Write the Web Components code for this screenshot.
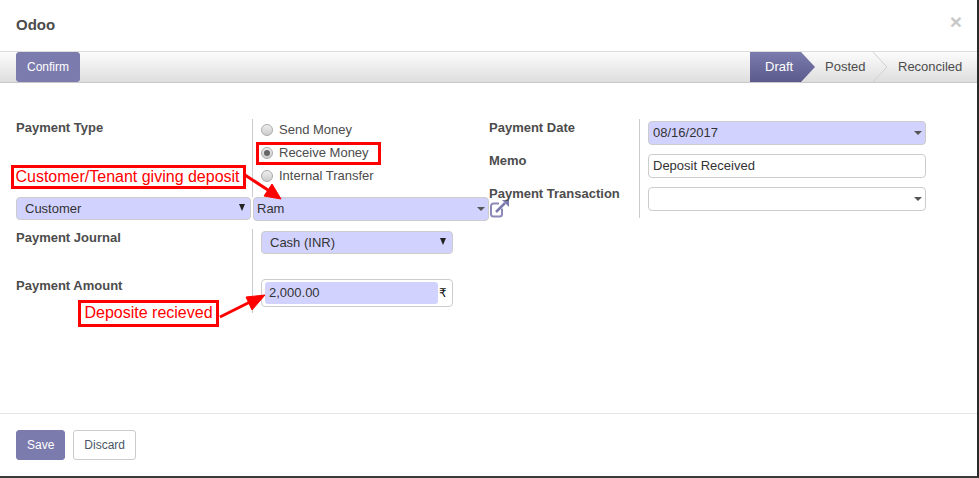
<!DOCTYPE html>
<html><head><meta charset="utf-8"><style>
html,body{margin:0;padding:0;background:#fff}
body{font:13px "Liberation Sans",Arial,sans-serif;color:#4c4c4c}
</style></head><body>
<o-dialog title-text="Odoo">
  <o-btn slot="actions" primary style="height:30px">Confirm</o-btn>
  <o-status slot="status"></o-status>
  <o-form></o-form>
  <o-btn slot="footer" primary>Save</o-btn>
  <o-btn slot="footer">Discard</o-btn>
</o-dialog>
<o-notes></o-notes>
<script>
function def(name,html,init){customElements.define(name,class extends HTMLElement{
  constructor(){super();const r=this.attachShadow({mode:'open'});r.innerHTML=typeof html==='function'?html(this):html;}
  connectedCallback(){if(init)init(this)}
})}
def('o-btn',`<style>
:host{display:inline-flex;align-items:center;justify-content:center;box-sizing:border-box;height:30px;padding:0 10px;border:1px solid #ccc;border-radius:3px;background:#fff;color:#4a5668;font:12px "Liberation Sans",sans-serif}
:host([primary]){background:#7c7bad;border-color:#7c7bad;color:#fff}
</style><slot></slot>`);
def('o-dialog',`<style>
:host{display:flex;flex-direction:column;box-sizing:border-box;width:979px;height:478px;border-right:2px solid #2a2a2a;border-bottom:2px solid #3a3a3a;background:#fff}
header{height:51px;flex:none;display:flex;align-items:center;justify-content:space-between;box-sizing:border-box;padding:0 19px 0 16px}
h4{margin:0;font:bold 15px "Liberation Sans",sans-serif;color:#4c4c4c;position:relative;top:-1px}
.x{font:bold 21px "Liberation Sans",sans-serif;color:#c8c8c8;line-height:1;position:relative;top:-4px;left:4px}
.bar{height:32px;flex:none;box-sizing:border-box;display:flex;justify-content:space-between;padding:0 0 0 16px;border-top:1px solid #ddd;border-bottom:1px solid #c8c8c8;background:linear-gradient(#fcfcfc,#dedede)}
main{flex:1;min-height:0}
footer{height:63px;flex:none;box-sizing:border-box;border-top:1px solid #e5e5e5;padding:16px 16px;display:flex;gap:8px}
</style>
<header><h4></h4><span class="x">×</span></header>
<div class="bar"><slot name="actions"></slot><slot name="status"></slot></div>
<main><slot></slot></main>
<footer><slot name="footer"></slot></footer>`,el=>{el.shadowRoot.querySelector('h4').textContent=el.getAttribute('title-text')});
def('o-status',`<style>
:host{display:block;height:30px;width:227px;flex:none}
.w{display:flex;height:29px;position:relative;font:13px "Liberation Sans",sans-serif;color:#4c4c4c;align-items:center}
.d{position:absolute;left:0;top:0;width:66px;height:30px;box-sizing:border-box;display:flex;align-items:center;padding:0 0 1px 15px;color:#fff;background:linear-gradient(#7c7bad,#5b5a8c);clip-path:polygon(0 0,51px 0,65px 15px,51px 30px,0 30px)}
.p{position:absolute;left:75px}.r{position:absolute;left:148px}
svg{position:absolute;left:121px;top:0}
</style><div class="w"><div class="d">Draft</div><span class="p">Posted</span>
<svg width="18" height="30" fill="none" stroke="#cfcfcf"><path d="M2 0l14 15L2 30"/></svg><span class="r">Reconciled</span></div>`);
def('o-select',`<style>
:host{display:block;box-sizing:border-box;height:24px;border:1px solid #ccc;border-radius:4px;background:#fff;position:relative;font:13px "Liberation Sans",sans-serif;color:#333;line-height:22px;padding-left:3px}
:host([req]){background:#d2d2ff}
:host([native]){padding-left:8px;height:23px}
i{position:absolute;right:3px;top:9px;width:0;height:0;border:4px solid transparent;border-top-color:#555;border-bottom:0}
b{position:absolute;right:5px;top:6px;width:0;height:0;border:3.5px solid transparent;border-top:7px solid #222;border-bottom:0}
</style><slot></slot><i></i>`,el=>{if(el.hasAttribute('native')){const s=el.shadowRoot;s.querySelector('i').remove();const b=document.createElement('b');if(el.classList.contains('cash'))b.style.right='6px';s.appendChild(b)}});
def('o-radio',`<style>
:host{display:flex;align-items:center;height:23px;gap:6px;font:13px "Liberation Sans",sans-serif;color:#4c4c4c}
u{width:12px;height:12px;box-sizing:border-box;border:1px solid #aaa;border-radius:50%;background:linear-gradient(#eee,#ccc);display:grid;place-items:center}
:host([on]) u::after{content:"";width:6px;height:6px;border-radius:50%;background:#666}
</style><u></u><slot></slot>`);
def('o-form',`<style>
:host{display:flex;padding-top:36px;height:100%;box-sizing:border-box}
.l{font:bold 13px "Liberation Sans",sans-serif;color:#4c4c4c;box-sizing:border-box}
.left{margin-left:16px;width:473px;flex:none}
.top{display:flex;height:78px}
.top .l{width:236px;padding-top:1px}
.cell{border-left:1px solid #ccc;padding-left:8px;padding-top:0;box-sizing:border-box}
.top .radios{margin-top:-1px}
.mid{display:flex;height:25px;align-items:flex-start}
.mid o-select:first-child{width:235px;margin-right:2px;flex:none}
.mid o-select:nth-child(2){width:236px;flex:none}
.mid svg{flex:none;margin:3px 0 0 1px;overflow:visible}
.bot{display:grid;grid-template-columns:236px 1fr;margin-top:7px}
.bot .cell{height:84px;padding-top:2px}
.names .l{height:48px;padding-top:1px}
.amt{margin-top:25px;width:192px;height:28px;box-sizing:border-box;border:1px solid #ccc;border-radius:4px;display:flex;align-items:center;padding:2px 0 2px 3px;gap:1px;font:13px "Liberation Sans",sans-serif;color:#222}
.amt span{width:173px;flex:none;box-sizing:border-box;height:22px;background:#d2d2ff;border-radius:3px;line-height:22px;padding-left:4px;color:#333}
.amt em{font:normal 12px "DejaVu Sans",sans-serif;color:#111}
.right{display:flex;height:99px}
.right .names{width:150px}
.right .names .l{height:33px;padding-top:1px}
.right .cell{width:278px;display:flex;flex-direction:column;gap:9px;padding-top:2px;box-sizing:content-box}
.right o-select{padding-left:4px}
.cash{width:192px}
</style>
<div class="left">
 <div class="top"><div class="l">Payment Type</div><div class="cell"><div class="radios">
  <o-radio>Send Money</o-radio><o-radio on>Receive Money</o-radio><o-radio>Internal Transfer</o-radio></div></div></div>
 <div class="mid"><o-select req native>Customer</o-select><o-select req>Ram</o-select>
  <svg width="20" height="18" viewBox="0 0 20 18" fill="none"><path d="M12 8.500v5.500a2.500 2.500 0 0 1-2.500 2.500H3.500A2.500 2.500 0 0 1 1 14V6a2.500 2.500 0 0 1 2.500-2.500H9" stroke="#8a89b8" stroke-width="2"/><path d="M6 12L15 3" stroke="#7c7bad" stroke-width="2.500"/><path d="M12 0h7v7z" fill="#7c7bad"/></svg></div>
 <div class="bot"><div class="names"><div class="l">Payment Journal</div><div class="l">Payment Amount</div></div>
  <div class="cell"><o-select req native class="cash">Cash (INR)</o-select><div class="amt"><span>2,000.00</span><em>₹</em></div></div></div>
</div>
<div class="right"><div class="names"><div class="l">Payment Date</div><div class="l">Memo</div><div class="l">Payment Transaction</div></div>
 <div class="cell"><o-select req>08/16/2017</o-select><o-select class="memo">Deposit Received</o-select><o-select></o-select></div></div>`,el=>{
  el.shadowRoot.querySelector('.memo').shadowRoot.querySelector('i').remove();
});
def('o-notes',`<style>
:host{display:block;position:absolute;left:0;top:0;width:979px;height:478px;pointer-events:none}
.n{position:absolute;box-sizing:border-box;border:3px solid #f00;color:#f00;font:16px "Liberation Sans",sans-serif;display:flex;align-items:center;justify-content:center;white-space:nowrap;background:#fff}
svg{position:absolute;left:0;top:0}
</style>
<svg width="979" height="478"><g fill="#f00" stroke="#f00"><path d="M245 175L271 192" stroke-width="3"/><path d="M281 199L264 196L272 184z"/><path d="M220 317L250 302" stroke-width="3"/><path d="M265 295L252 310L246 297z"/></g></svg>
<div class="n" style="left:11px;top:165px;width:235px;height:24px;padding-right:2px">Customer/Tenant giving deposit</div>
<div class="n" style="left:256px;top:142px;width:125px;height:23px;background:none"></div>
<div class="n" style="left:78px;top:300px;width:141px;height:27px;padding-bottom:2px">Deposite recieved</div>`);
</script></body></html>
